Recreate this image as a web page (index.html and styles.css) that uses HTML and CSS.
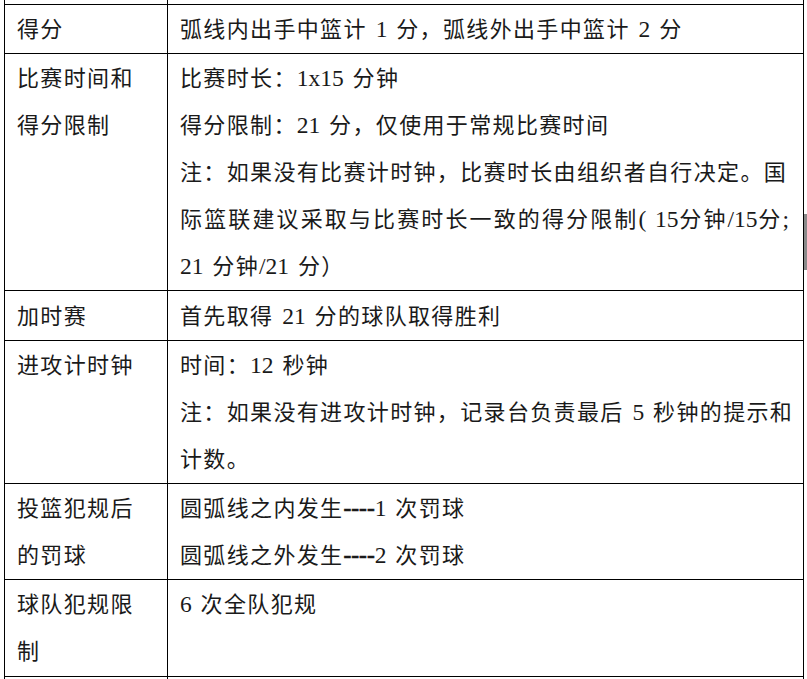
FILE: index.html
```html
<!DOCTYPE html>
<html lang="zh-CN">
<head>
<meta charset="utf-8">
<title>规则</title>
<link rel="stylesheet" href="styles.css">
</head>
<body>
<div class="page">
<table class="rules">
  <colgroup><col class="c1"><col class="c2"></colgroup>
  <tr class="spacer"><td></td><td></td></tr>
  <tr>
    <td>得分</td>
    <td>弧线内出手中篮计 <span class="n">1</span> 分，弧线外出手中篮计 <span class="n">2</span> 分</td>
  </tr>
  <tr class="tall">
    <td>比赛时间和<br>得分限制</td>
    <td>比赛时长：<span class="n">1x15</span> 分钟<br>得分限制：<span class="n">21</span> 分，仅使用于常规比赛时间<br>注：如果没有比赛计时钟，比赛时长由组织者自行决定。国<span class="just">际篮联建议采取与比赛时长一致的得分限制<span class="n">( 15</span>分钟<span class="n">/15</span>分<span class="n">;</span></span><span class="n">21</span> 分钟<span class="n">/21</span> 分）</td>
  </tr>
  <tr class="r3">
    <td>加时赛</td>
    <td>首先取得 <span class="n">21</span> 分的球队取得胜利</td>
  </tr>
  <tr>
    <td>进攻计时钟</td>
    <td>时间：<span class="n">12</span> 秒钟<br>注：如果没有进攻计时钟，记录台负责最后 <span class="n">5</span> 秒钟的提示和<br>计数。</td>
  </tr>
  <tr>
    <td>投篮犯规后<br>的罚球</td>
    <td>圆弧线之内发生<span class="n"><span class="b">----</span>1</span> 次罚球<br>圆弧线之外发生<span class="n"><span class="b">----</span>2</span> 次罚球</td>
  </tr>
  <tr class="r6">
    <td>球队犯规限<br>制</td>
    <td><span class="n">6</span> 次全队犯规</td>
  </tr>
  <tr class="tail"><td></td><td></td></tr>
</table>
<div class="thumb"></div>
</div>
</body>
</html>
```
FILE: styles.css
```css
html, body {
  margin: 0;
  padding: 0;
  background: #ffffff;
}
.page {
  position: relative;
  width: 807px;
  height: 679px;
  overflow: hidden;
}
.rules {
  margin-left: 4px;
  width: 799px;
  border-collapse: collapse;
  table-layout: fixed;
  font-family: "Liberation Serif", "Noto Sans CJK SC", serif;
  font-size: 22px;
  color: #1a1a1a;
}
.c1 { width: 163px; }
.c2 { width: 636px; }
.rules td {
  border: 1px solid #000;
  padding: 1px 4px 0 12px;
  line-height: 47px;
  letter-spacing: 1.35px;
  word-spacing: 2px;
  vertical-align: top;
  white-space: nowrap;
}
.rules .spacer td {
  border-top: none;
  height: 4px;
  padding: 0;
  line-height: 0;
}
.rules .r3 td { padding-top: 2px; }
.rules .r6 td { padding-top: 1px; padding-bottom: 1px; }
.rules .tail td {
  height: 47px;
  padding: 0;
}
.just {
  display: block;
  margin-right: 10px;
  text-align: justify;
  text-align-last: justify;
  white-space: normal;
}
.n {
  letter-spacing: 0;
  font-size: 23.5px;
  font-family: "Liberation Serif", serif;
}
.b {
  font-weight: bold;
  -webkit-text-stroke: 0.6px #1a1a1a;
}
.thumb {
  position: absolute;
  left: 804px;
  top: 214px;
  width: 3px;
  height: 56px;
  background: #8a8a8a;
}
```
